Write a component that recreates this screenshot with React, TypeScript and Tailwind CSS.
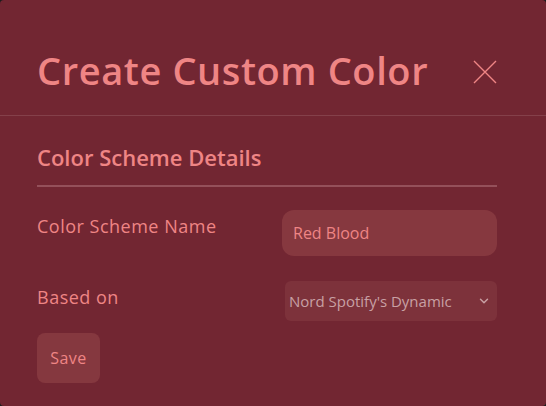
import React, { useState } from 'react';

const App: React.FC = () => {
    const [name, setName] = useState('Red Blood');

    return (
        <div className="w-[546px] h-[406px] bg-[#1c1c1c]" style={{ fontFamily: '"Open Sans", "Noto Sans", sans-serif' }}>
            <div className="w-full h-full bg-[#722632] rounded-[4px] flex flex-col">
                <div className="h-[116px] shrink-0 border-b border-[#84404a] pl-[37px] pr-[49px] pt-[42px] flex justify-between">
                    <h1 className="text-[38px] leading-[56px] font-semibold text-[#ef8585] tracking-[0.6px]">Create Custom Color</h1>
                    <button className="w-[24px] h-[24px] mt-[18px] text-[#ef8585]" aria-label="Close">
                        <svg viewBox="0 0 24 24" width="24" height="24" fill="none" stroke="currentColor" strokeWidth="1.4">
                            <path d="M1 1 L23 23 M23 1 L1 23" />
                        </svg>
                    </button>
                </div>

                <div className="pl-[37px] pr-[49px] pt-[25px]">
                    <h2 className="text-[22px] leading-[32px] font-semibold text-[#ef8585] pb-[12px] border-b-2 border-[#94505a]">
                        Color Scheme Details
                    </h2>

                    <div className="flex justify-between items-center mt-[23px]">
                        <label className="text-[18px] text-[#ef8585] tracking-[0.5px] -mt-[14px]">Color Scheme Name</label>
                        <input
                            type="text"
                            value={name}
                            onChange={(e) => setName(e.target.value)}
                            className="w-[215px] h-[46px] rounded-[12px] bg-[#86383f] px-[11px] text-[16px] text-[#ef8585] outline-none"
                        />
                    </div>

                    <div className="flex justify-between items-center mt-[25px]">
                        <label className="text-[18px] text-[#ef8585] tracking-[0.5px] -mt-[8px]">Based on</label>
                        <div className="w-[212px] h-[40px] rounded-[6px] bg-[#7d323b] flex items-center justify-between pl-[4px] pr-[6px] text-[15px] text-[#c8a0a4]">
                            <span className="whitespace-nowrap">Nord Spotify's Dynamic</span>
                            <svg viewBox="0 0 24 24" width="14" height="14" fill="none" stroke="currentColor" strokeWidth="2.5" strokeLinecap="round" strokeLinejoin="round">
                                <path d="M6 9l6 6 6-6" />
                            </svg>
                        </div>
                    </div>

                    <button className="mt-[12px] w-[63px] h-[50px] rounded-[8px] bg-[#85383f] text-[16px] tracking-[0.5px] text-[#ef8585]">
                        Save
                    </button>
                </div>
            </div>
        </div>
    );
};

export default App;
